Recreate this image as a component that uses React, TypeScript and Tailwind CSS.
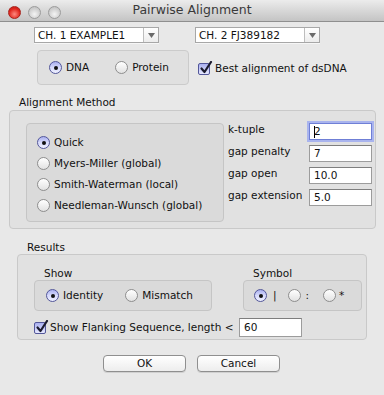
import React from 'react';
import clsx from 'clsx';

const Radio: React.FC<{ on?: boolean }> = ({ on }) => (
  <span
    className={clsx(
      'flex w-[13px] h-[13px] shrink-0 items-center justify-center rounded-full border',
      on
        ? 'border-[#53579a] bg-linear-to-b from-[#aab0ef] via-[#d7dafb] to-[#eef0ff]'
        : 'border-[#8e8e8e] bg-linear-to-b from-[#ffffff] to-[#e2e2e2]'
    )}
  >
    {on && <span className="h-[4px] w-[4px] rounded-full bg-[#111]" />}
  </span>
);

const Check: React.FC = () => (
  <span className="relative flex h-[12px] w-[12px] shrink-0 rounded-[2px] border border-[#53579a] bg-linear-to-b from-[#aab0ef] to-[#e6e8ff]">
    <svg viewBox="0 0 14 14" className="absolute -top-[3px] left-[0px] h-[14px] w-[14px]">
      <path d="M2.5 7.5 L5.5 11 L12 1" fill="none" stroke="#1b1b2e" strokeWidth="2.2" strokeLinecap="round" strokeLinejoin="round" />
    </svg>
  </span>
);

const Combo: React.FC<{ label: string }> = ({ label }) => (
  <div className="flex h-[16px] w-[125px] border border-[#a7a7a7] bg-white shadow-[0_1px_0_#f6f6f6]">
    <span className="flex-1 pl-[3px] leading-[14px]">{label}</span>
    <span className="flex w-[15px] items-center justify-center border-l border-[#bdbdbd] bg-linear-to-b from-[#ffffff] to-[#ececec]">
      <svg viewBox="0 0 7 5" className="h-[5px] w-[7px]">
        <path d="M0 0 H7 L3.5 5 Z" fill="#6a6a6a" />
      </svg>
    </span>
  </div>
);

const Field: React.FC<{ value: string; focus?: boolean; className?: string }> = ({ value, focus, className }) => (
  <div
    className={clsx(
      'flex h-[17px] items-center border bg-white pl-[4px] leading-[15px]',
      focus
        ? 'border-[#6f7fd6] shadow-[0_0_0_2px_#a9b4ee]'
        : 'border-[#9c9c9c] border-t-[#7e7e7e]',
      className
    )}
  >
    {focus && <span className="mr-[-1px] h-[12px] w-px bg-black" />}
    <span>{value}</span>
  </div>
);

const Button: React.FC<{ label: string }> = ({ label }) => (
  <button className="h-[17px] w-[83px] rounded-[4px] border border-[#8f8f8f] bg-linear-to-b from-[#ffffff] to-[#ededed] text-center leading-[15px] shadow-[0_1px_0_#d0d0d0]">
    {label}
  </button>
);

const Light: React.FC<{ red?: boolean }> = ({ red }) => (
  <span
    className={clsx(
      'h-[13px] w-[13px] rounded-full border',
      red
        ? 'border-[#a8221b] bg-[radial-gradient(circle_at_50%_65%,#ff8a80,#e0261d_60%,#b81b14)]'
        : 'border-[#9c9c9c] bg-[radial-gradient(circle_at_50%_65%,#f4f4f4,#cfcfcf_60%,#b9b9b9)]'
    )}
  />
);

export default function App() {
  return (
    <div className="flex h-[395px] w-[384px] flex-col overflow-hidden bg-[#e8e8e8] font-['DejaVu_Sans',sans-serif] text-[10.5px] text-[#111]">
      {/* title bar */}
      <div className="relative flex h-[22px] shrink-0 items-center border-b border-[#8f8f8f] bg-linear-to-b from-[#ececec] to-[#c4c4c4]">
        <div className="flex items-center gap-[7px] pl-[8px] pt-[3px]">
          <Light red />
          <Light />
          <Light />
        </div>
        <span className="absolute inset-x-0 text-center text-[12.5px] text-[#3a3a3a]">Pairwise Alignment</span>
      </div>

      {/* sequences */}
      <div className="flex gap-[36px] pl-[34px] pt-[5px]">
        <Combo label="CH. 1 EXAMPLE1" />
        <Combo label="CH. 2 FJ389182" />
      </div>

      <div className="flex items-center gap-[9px] pl-[37px] pt-[7px]">
        <div className="flex h-[35px] w-[152px] items-center rounded-[4px] border border-[#cbcbcb] bg-[#e0e0e0] pl-[11px]">
          <Radio on />
          <span className="ml-[4px]">DNA</span>
          <span className="ml-[26px]"><Radio /></span>
          <span className="ml-[4px]">Protein</span>
        </div>
        <div className="flex items-center gap-[5px] pt-[2px]">
          <Check />
          <span>Best alignment of dsDNA</span>
        </div>
      </div>

      {/* alignment method */}
      <div className="pl-[19px] pt-[10px] leading-[14px]">Alignment Method</div>
      <div className="ml-[9px] mt-[1px] flex h-[119px] w-[367px] rounded-[4px] border border-[#c9c9c9] bg-[#e1e1e1] pl-[16px] pt-[12px]">
        <div className="flex h-[99px] w-[198px] flex-col gap-[8px] rounded-[4px] border border-[#c5c5c5] bg-[#dadada] pl-[10px] pt-[12px]">
          {[
            ['Quick', true],
            ['Myers-Miller (global)', false],
            ['Smith-Waterman (local)', false],
            ['Needleman-Wunsch (global)', false],
          ].map(([name, on]) => (
            <div key={name as string} className="flex h-[13px] items-center gap-[4px]">
              <Radio on={on as boolean} />
              <span>{name as string}</span>
            </div>
          ))}
        </div>
        <div className="ml-[4px] flex flex-col gap-[5px]">
          {[
            ['k-tuple', '2', true],
            ['gap penalty', '7', false],
            ['gap open', '10.0', false],
            ['gap extension', '5.0', false],
          ].map(([label, value, focus]) => (
            <div key={label as string} className="flex h-[17px] items-center">
              <span className="w-[81px] pb-[4px]">{label as string}</span>
              <Field value={value as string} focus={focus as boolean} className="w-[63px]" />
            </div>
          ))}
        </div>
      </div>

      {/* results */}
      <div className="pl-[27px] pt-[11px] leading-[14px]">Results</div>
      <div className="ml-[17px] flex h-[86px] w-[350px] flex-col rounded-[4px] border border-[#c9c9c9] bg-[#e1e1e1] pl-[16px] pt-[11px]">
        <div className="flex gap-[31px]">
          <div className="flex flex-col">
            <span className="pl-[10px] leading-[14px]">Show</span>
            <div className="flex h-[31px] w-[178px] items-center rounded-[4px] border border-[#c5c5c5] bg-[#dadada] pl-[11px]">
              <Radio on />
              <span className="ml-[4px]">Identity</span>
              <span className="ml-[22px]"><Radio /></span>
              <span className="ml-[4px]">Mismatch</span>
            </div>
          </div>
          <div className="flex flex-col">
            <span className="pl-[10px] leading-[14px]">Symbol</span>
            <div className="flex h-[31px] w-[119px] items-center rounded-[4px] border border-[#c5c5c5] bg-[#dadada] pl-[10px]">
              <Radio on />
              <span className="ml-[6px]">|</span>
              <span className="ml-[11px]"><Radio /></span>
              <span className="ml-[5px]">:</span>
              <span className="ml-[14px]"><Radio /></span>
              <span className="ml-[3px]">*</span>
            </div>
          </div>
        </div>
        <div className="mt-[7px] flex items-center">
          <Check />
          <span className="ml-[4px] w-[189px]">Show Flanking Sequence, length &lt;</span>
          <Field value="60" className="h-[19px] w-[63px]" />
        </div>
      </div>

      {/* buttons */}
      <div className="flex gap-[11px] pl-[103px] pt-[15px]">
        <Button label="OK" />
        <Button label="Cancel" />
      </div>
    </div>
  );
}
